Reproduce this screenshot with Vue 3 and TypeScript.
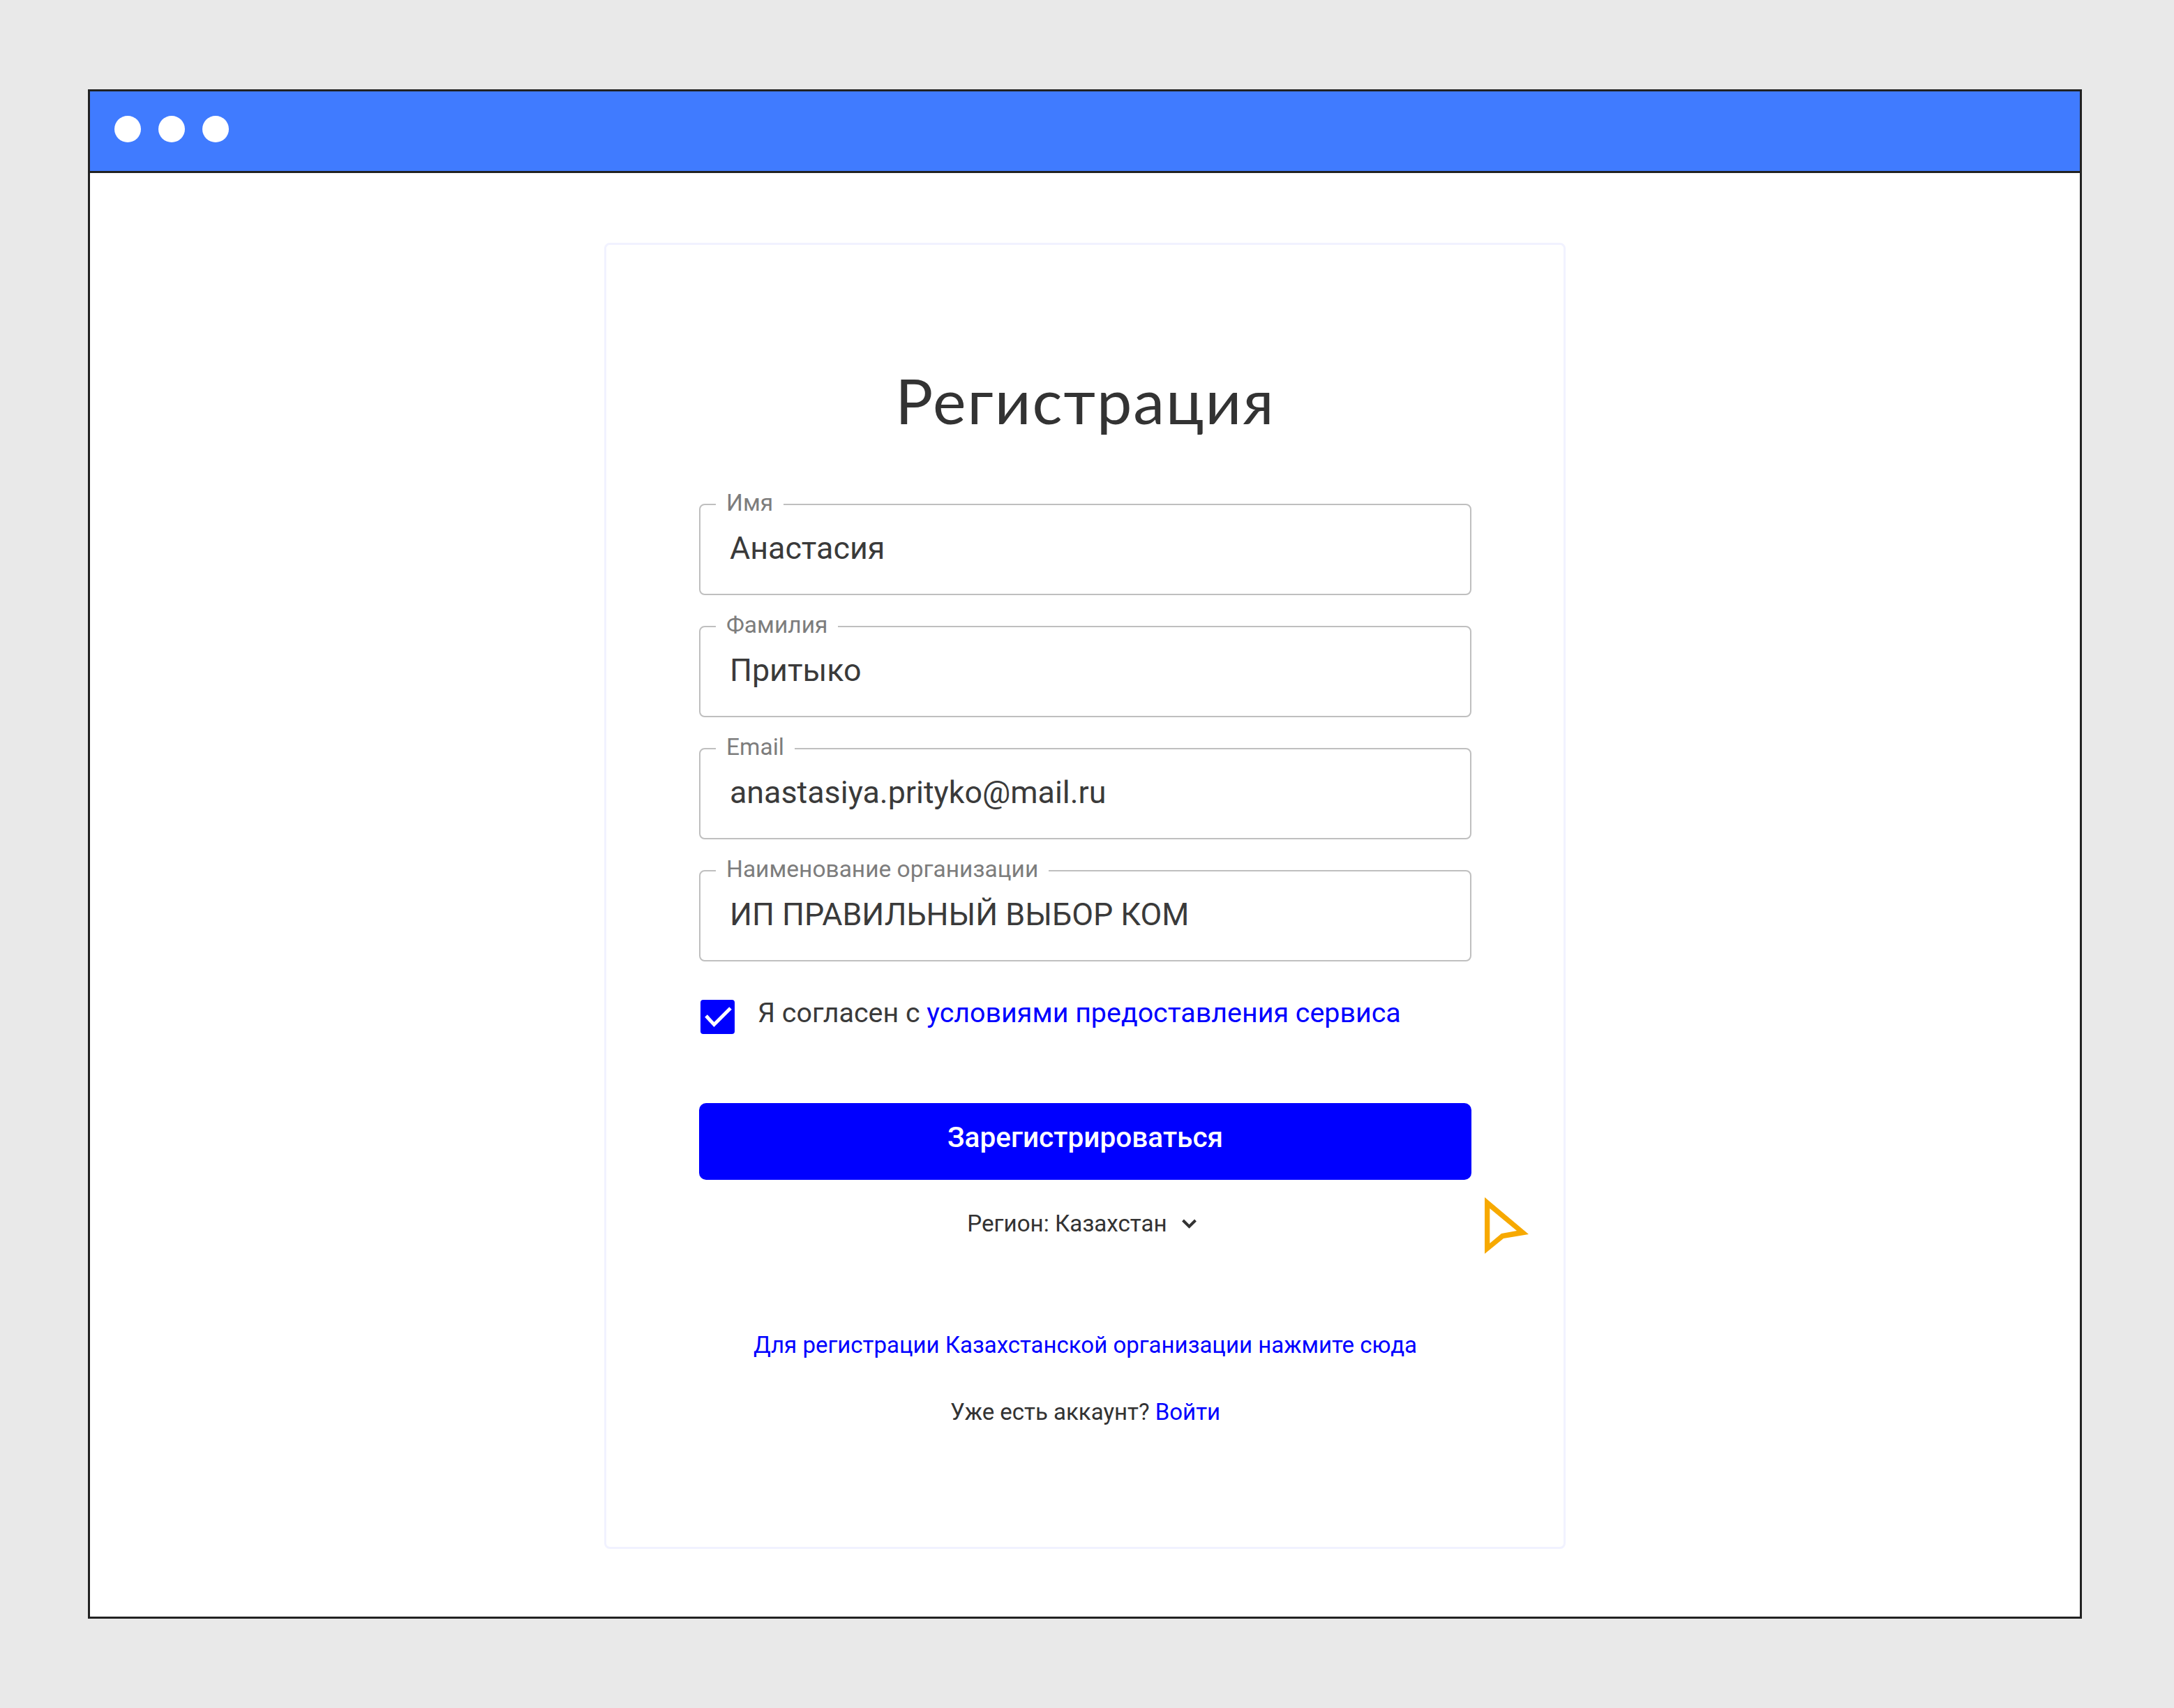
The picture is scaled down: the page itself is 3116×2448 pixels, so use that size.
<template>
  <div class="page">
    <div class="window">
      <header class="window-bar">
        <span v-for="n in 3" :key="n" class="dot"></span>
      </header>

      <main class="window-body">
        <section class="card">
          <h1 class="title">Регистрация</h1>

          <fieldset v-for="field in fields" :key="field.label" class="field">
            <legend>{{ field.label }}</legend>
            <div class="field-value">{{ field.value }}</div>
          </fieldset>

          <div class="agree">
            <span class="checkbox">
              <svg width="49" height="49" viewBox="0 0 49 49">
                <path d="M8 23 L19.5 35.5 L43 12" fill="none" stroke="#fff" stroke-width="5" />
              </svg>
            </span>
            <span class="agree-text">Я согласен с <a>условиями предоставления сервиса</a></span>
          </div>

          <button class="submit" type="button">Зарегистрироваться</button>

          <div class="region">
            Регион: Казахстан
            <svg width="24" height="14" viewBox="0 0 24 14">
              <path d="M2.5 2 L11.5 11 L20.5 2" fill="none" stroke="#333" stroke-width="4" />
            </svg>
            <svg class="cursor" width="72" height="90" viewBox="0 0 72 90">
              <path
                d="M4 4 L67 57 L31 63 L4 85 Z M11.3 20 L11.3 70 L28 56 L50 52 Z"
                fill="#f7a900"
                fill-rule="evenodd"
              />
            </svg>
          </div>

          <a class="org-link">Для регистрации Казахстанской организации нажмите сюда</a>
          <p class="login">Уже есть аккаунт? <a>Войти</a></p>
        </section>
      </main>
    </div>
  </div>
</template>

<script setup lang="ts">
interface Field {
  label: string
  value: string
}

const fields: Field[] = [
  { label: 'Имя', value: 'Анастасия' },
  { label: 'Фамилия', value: 'Притыко' },
  { label: 'Email', value: 'anastasiya.prityko@mail.ru' },
  { label: 'Наименование организации', value: 'ИП ПРАВИЛЬНЫЙ ВЫБОР КОМ' },
]
</script>

<style scoped>
.page {
  box-sizing: border-box;
  width: 3116px;
  height: 2448px;
  padding: 128px 132px 128px 126px;
  background: #e9e9e9;
  font-family: Roboto, sans-serif;
  color: #333;
}

.window {
  display: flex;
  flex-direction: column;
  box-sizing: border-box;
  height: 2192px;
  border: 3px solid #222;
  background: #fff;
}

.window-bar {
  display: flex;
  align-items: center;
  gap: 25px;
  flex: none;
  box-sizing: content-box;
  height: 108px;
  padding: 0 0 6px 35px;
  background: #407bff;
  border-bottom: 3px solid #222;
}

.dot {
  width: 38px;
  height: 38px;
  border-radius: 50%;
  background: #fff;
}

.window-body {
  display: flex;
  justify-content: center;
  padding-top: 100px;
}

.card {
  display: flex;
  flex-direction: column;
  box-sizing: border-box;
  width: 1378px;
  height: 1872px;
  padding: 169px 132px 0 133px;
  border: 3px solid #f1f2ff;
  border-radius: 8px;
}

.title {
  margin: 0 0 76px;
  font-family: Lato, sans-serif;
  font-size: 90px;
  font-weight: 400;
  letter-spacing: 2px;
  line-height: 106px;
  text-align: center;
  color: #333;
}

.field {
  box-sizing: border-box;
  height: 151px;
  margin: 0 0 24px;
  padding: 0 42px;
  border: 2px solid #bfbfbf;
  border-radius: 8px;
}

.field legend {
  margin-left: -20px;
  padding: 0 15px 4px;
  font-size: 33.5px;
  line-height: 38px;
  color: #7d7d7d;
}

.field-value {
  font-size: 44.8px;
  line-height: 52px;
  margin-top: 16px;
  color: #3a3a3a;
}

.agree {
  display: flex;
  align-items: flex-start;
  gap: 33px;
  margin: 31px 0 0 2px;
}

.checkbox {
  flex: none;
  width: 49px;
  height: 49px;
  border-radius: 4px;
  background: #0000ff;
}

.checkbox svg {
  display: block;
}

.agree-text {
  margin-top: -4px;
  font-size: 39.4px;
  line-height: 46px;
  color: #3a3a3a;
}

a {
  color: #0000ff;
}

.submit {
  height: 110px;
  margin-top: 99px;
  padding: 0 0 12px;
  border: none;
  border-radius: 10px;
  background: #0000ff;
  color: #fff;
  font-family: Roboto, sans-serif;
  font-size: 40.6px;
  font-weight: 500;
}

.region {
  position: relative;
  display: flex;
  justify-content: center;
  align-items: center;
  gap: 20px;
  margin-top: 44px;
  padding-right: 8px;
  font-size: 33.2px;
  line-height: 38px;
}

.cursor {
  position: absolute;
  left: 1122px;
  top: -23px;
}

.org-link {
  margin-top: 136px;
  font-size: 33px;
  line-height: 38px;
  text-align: center;
}

.login {
  margin: 58px 0 0;
  font-size: 33px;
  line-height: 38px;
  text-align: center;
}
</style>

<style>
html,
body {
  margin: 0;
  background: #e9e9e9;
}
</style>
